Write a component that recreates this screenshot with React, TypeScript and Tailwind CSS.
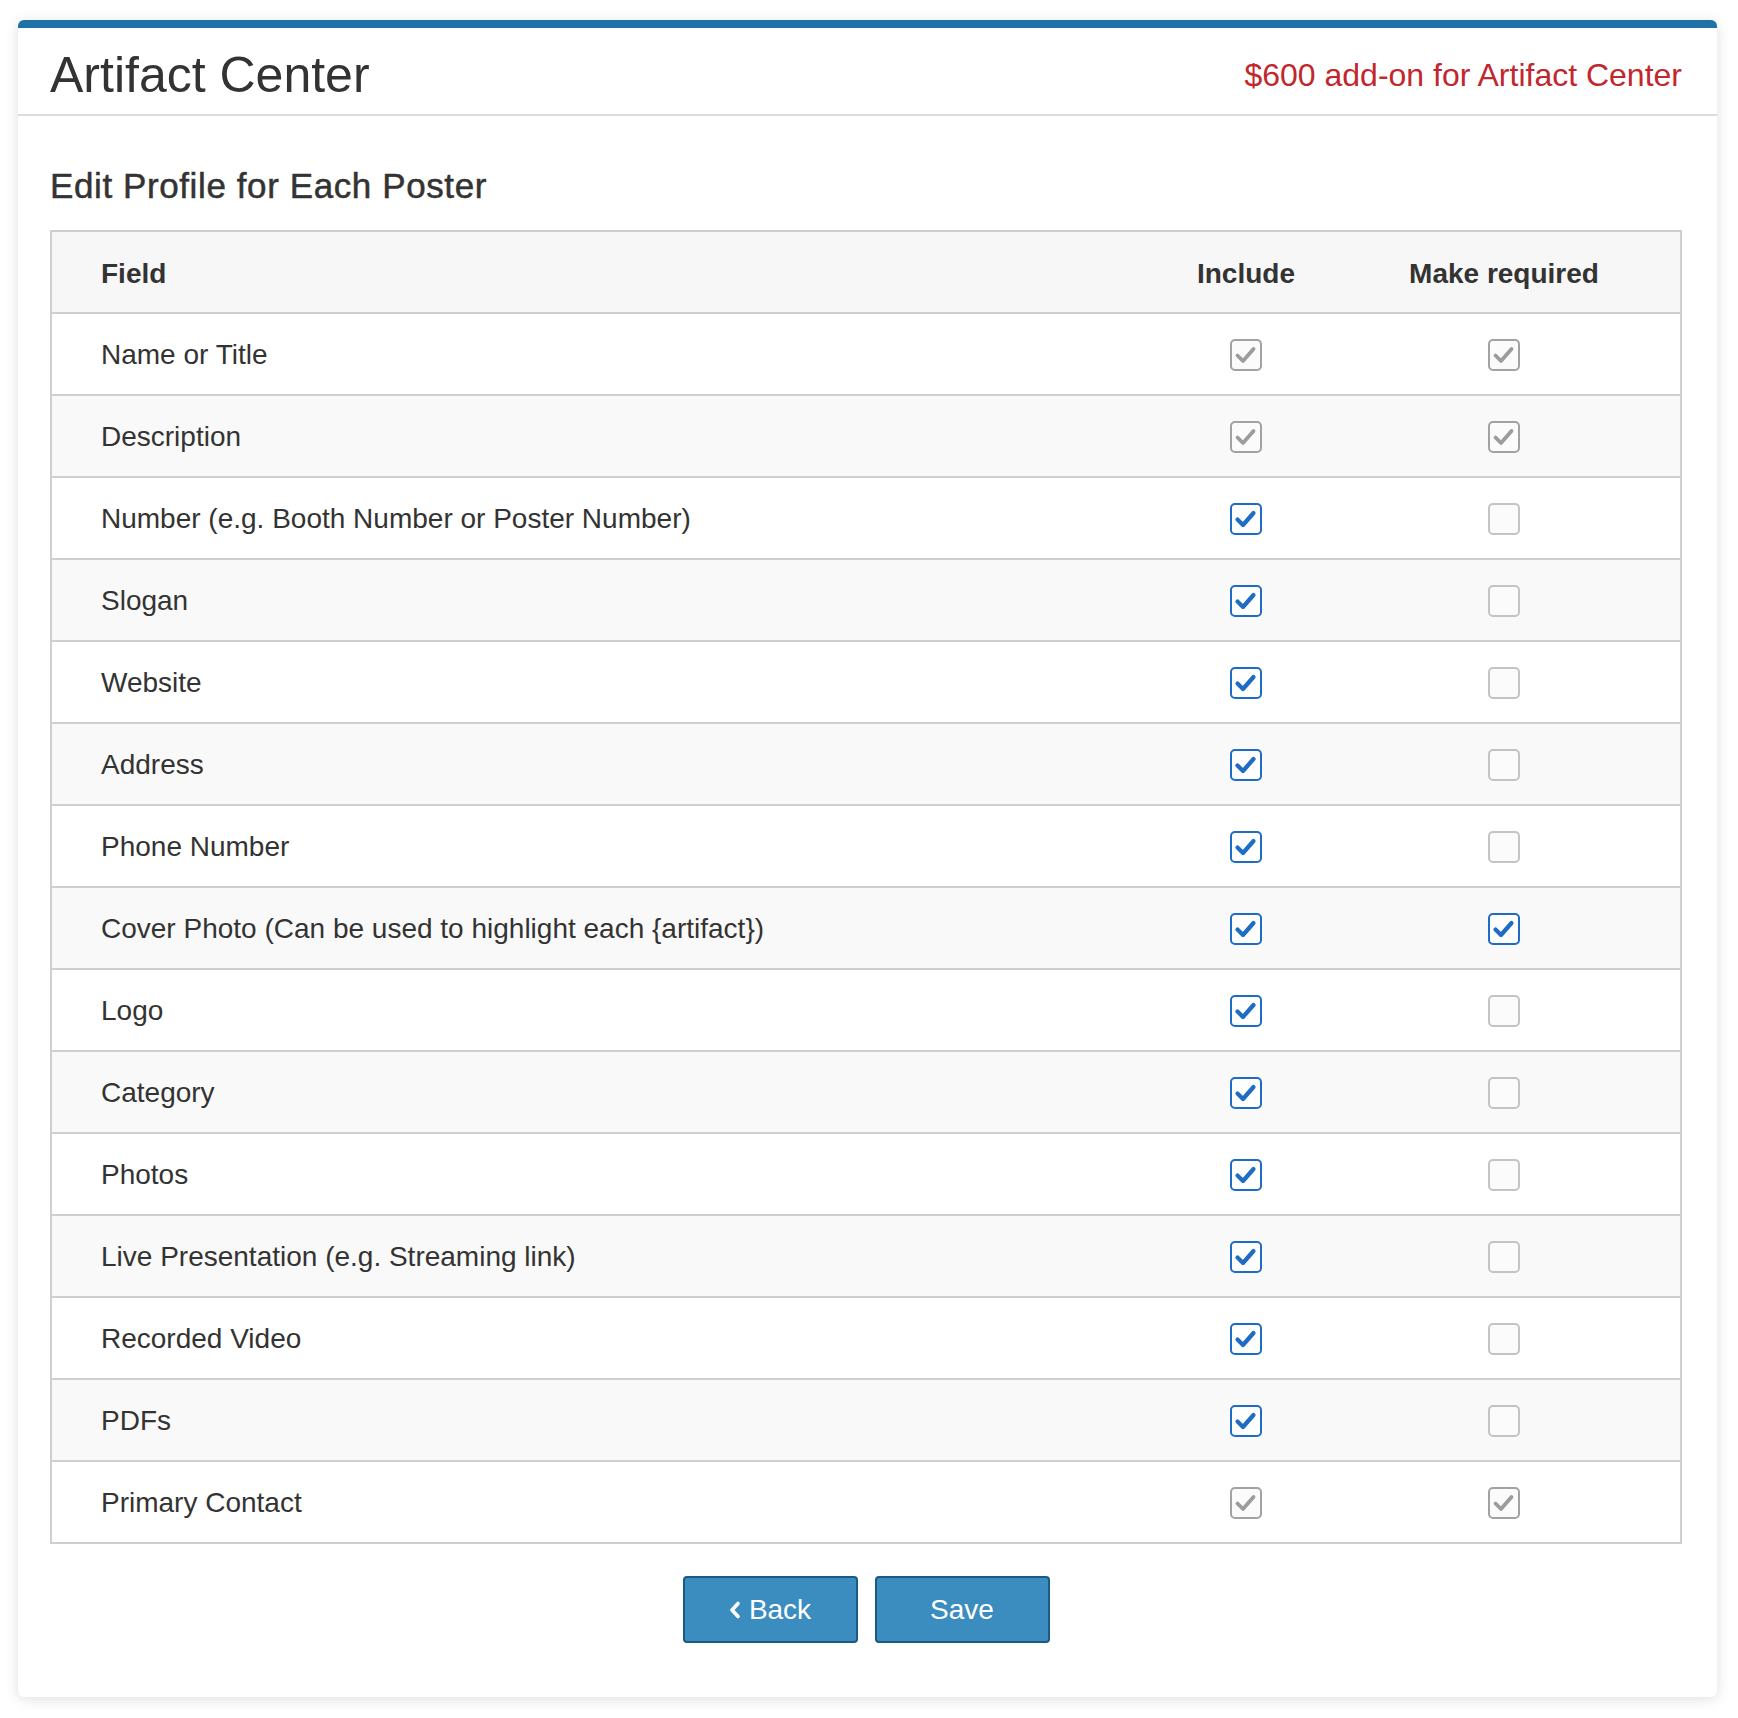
import React from 'react'
import clsx from 'clsx'

type Mark = 'locked' | 'on' | 'off'

type FieldRow = {
  label: string
  include: Mark
  required: Mark
}

const rows: FieldRow[] = [
  { label: 'Name or Title', include: 'locked', required: 'locked' },
  { label: 'Description', include: 'locked', required: 'locked' },
  { label: 'Number (e.g. Booth Number or Poster Number)', include: 'on', required: 'off' },
  { label: 'Slogan', include: 'on', required: 'off' },
  { label: 'Website', include: 'on', required: 'off' },
  { label: 'Address', include: 'on', required: 'off' },
  { label: 'Phone Number', include: 'on', required: 'off' },
  { label: 'Cover Photo (Can be used to highlight each {artifact})', include: 'on', required: 'on' },
  { label: 'Logo', include: 'on', required: 'off' },
  { label: 'Category', include: 'on', required: 'off' },
  { label: 'Photos', include: 'on', required: 'off' },
  { label: 'Live Presentation (e.g. Streaming link)', include: 'on', required: 'off' },
  { label: 'Recorded Video', include: 'on', required: 'off' },
  { label: 'PDFs', include: 'on', required: 'off' },
  { label: 'Primary Contact', include: 'locked', required: 'locked' },
]

const Checkbox: React.FC<{ mark: Mark }> = ({ mark }) => {
  return (
    <div
      className={clsx(
        'mt-[2px] flex h-[32px] w-[32px] items-center justify-center rounded-[5px] border-2',
        mark === 'on' && 'border-[#1f6cc6] bg-white',
        mark === 'locked' && 'border-[#a2a2a2] bg-[#fbfbfb]',
        mark === 'off' && 'border-[#c4c4c4] bg-[#fbfbfb]'
      )}
    >
      {mark !== 'off' ? (
        <svg viewBox="0 0 28 28" className="h-[28px] w-[28px]" aria-hidden="true">
          <polyline
            points="5.5,14.5 11,20 21.5,8"
            fill="none"
            stroke={mark === 'on' ? '#1f6cc6' : '#9c9c9c'}
            strokeWidth={mark === 'on' ? 4.2 : 3.8}
            strokeLinecap="round"
            strokeLinejoin="round"
          />
        </svg>
      ) : null}
    </div>
  )
}

// chevron-left, drawn thick like the icon font glyph
const Chevron = () => (
  <svg viewBox="0 0 12 18" className="h-[18px] w-[12px]" aria-hidden="true">
    <polyline
      points="9,2.5 3,9 9,15.5"
      fill="none"
      stroke="white"
      strokeWidth={3.6}
      strokeLinecap="round"
      strokeLinejoin="round"
    />
  </svg>
)

export default function App() {
  return (
    <div
      className="min-h-[1718px] bg-white pt-[20px] pl-[18px] pr-[21px] pb-[21px] text-[#333]"
      style={{ fontFamily: '"Liberation Sans", Arial, sans-serif' }}
    >
      <div className="rounded-[6px] border-t-[8px] border-[#1d73a8] bg-white shadow-[0_2px_14px_rgba(0,0,0,0.13)]">
        {/* header */}
        <div className="flex h-[88px] items-center justify-between border-b-2 border-[#dcdcdc] pl-[32px] pr-[35px]">
          <h1 className="mt-[7px] text-[50px] leading-none text-[#333]">Artifact Center</h1>
          <div className="mt-[8px] text-[32px] leading-none text-[#c1272d]">
            $600 add-on for Artifact Center
          </div>
        </div>

        <div className="pl-[32px] pr-[35px] pt-[50px] pb-[54px]">
          <h2 className="mb-[24px] text-[35px] leading-[40px] tracking-[0.6px] text-[#333] [-webkit-text-stroke:0.5px_#333]">
            Edit Profile for Each Poster
          </h2>

          <div className="border-2 border-[#cfcfcf] text-[28px]">
            <div className="grid h-[80px] grid-cols-[1fr_258px_258px] items-center bg-[#f7f7f7] pt-[4px] pl-[49px] pr-[47px] font-bold">
              <div>Field</div>
              <div className="text-center">Include</div>
              <div className="text-center">Make required</div>
            </div>
            {rows.map((row, i) => (
              <div
                key={row.label}
                className={clsx(
                  'grid h-[82px] grid-cols-[1fr_258px_258px] items-center border-t-2 border-[#cfcfcf] pl-[49px] pr-[47px]',
                  i % 2 === 1 ? 'bg-[#f9f9f9]' : 'bg-white'
                )}
              >
                <div className="pt-[2px]">{row.label}</div>
                <div className="flex justify-center">
                  <Checkbox mark={row.include} />
                </div>
                <div className="flex justify-center">
                  <Checkbox mark={row.required} />
                </div>
              </div>
            ))}
          </div>

          <div className="mt-[32px] flex justify-center gap-[17px]">
            <button className="flex h-[67px] w-[175px] items-center justify-center gap-[8px] rounded-[4px] border-2 border-[#1b5a84] bg-[#3c8dbf] text-[28px] text-white">
              <Chevron />
              Back
            </button>
            <button className="flex h-[67px] w-[175px] items-center justify-center rounded-[4px] border-2 border-[#1b5a84] bg-[#3c8dbf] text-[28px] text-white">
              Save
            </button>
          </div>
        </div>
      </div>
    </div>
  )
}
